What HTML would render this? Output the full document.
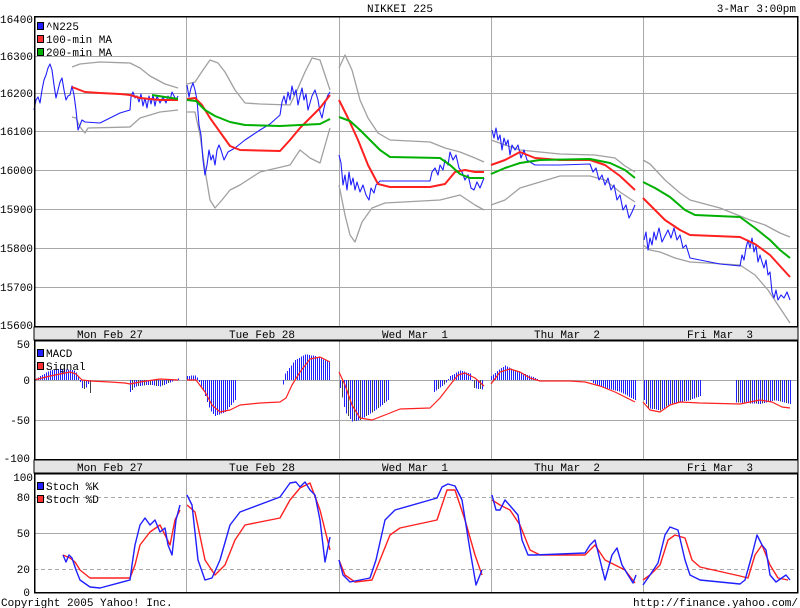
<!DOCTYPE html>
<html><head><meta charset="utf-8"><style>
html,body{margin:0;padding:0;background:#fff}
svg{display:block}
text{font-family:"Liberation Mono","DejaVu Sans Mono",monospace;font-size:11px;fill:#000;white-space:pre}
</style></head><body>
<svg id="s" width="800" height="608" viewBox="0 0 800 608" xmlns="http://www.w3.org/2000/svg" shape-rendering="crispEdges" xml:space="preserve">
<rect width="800" height="608" fill="#fff"/>
<text x="400" y="12" text-anchor="middle">NIKKEI 225</text>
<text x="796" y="12" text-anchor="end">3-Mar 3:00pm</text>
<g stroke="#a8a8a8" stroke-width="1">
<line x1="34" y1="56.5" x2="797" y2="56.5"/><line x1="34" y1="93.5" x2="797" y2="93.5"/>
<line x1="34" y1="131.5" x2="797" y2="131.5"/><line x1="34" y1="170.5" x2="797" y2="170.5"/>
<line x1="34" y1="209.5" x2="797" y2="209.5"/><line x1="34" y1="248.5" x2="797" y2="248.5"/>
<line x1="34" y1="287.5" x2="797" y2="287.5"/>
<line x1="186.5" y1="16" x2="186.5" y2="326"/><line x1="339.5" y1="16" x2="339.5" y2="326"/>
<line x1="491.5" y1="16" x2="491.5" y2="326"/><line x1="643.5" y1="16" x2="643.5" y2="326"/>
<line x1="34" y1="380.5" x2="797" y2="380.5"/><line x1="34" y1="420.5" x2="797" y2="420.5"/>
<line x1="186.5" y1="341" x2="186.5" y2="459"/><line x1="339.5" y1="341" x2="339.5" y2="459"/>
<line x1="491.5" y1="341" x2="491.5" y2="459"/><line x1="643.5" y1="341" x2="643.5" y2="459"/>
<line x1="34" y1="533.5" x2="797" y2="533.5"/>
<line x1="186.5" y1="474" x2="186.5" y2="592"/><line x1="339.5" y1="474" x2="339.5" y2="592"/>
<line x1="491.5" y1="474" x2="491.5" y2="592"/><line x1="643.5" y1="474" x2="643.5" y2="592"/>
</g>
<g stroke="#a8a8a8" stroke-dasharray="4,3"><line x1="34" y1="497.5" x2="797" y2="497.5"/><line x1="34" y1="569.5" x2="797" y2="569.5"/></g>
<rect x="34" y="327" width="764" height="13" fill="#e4e4e4" stroke="#000"/>
<rect x="34" y="460" width="764" height="13" fill="#e4e4e4" stroke="#000"/>
<g text-anchor="middle">
<text x="110" y="338">Mon Feb 27</text><text x="262" y="338">Tue Feb 28</text><text x="415" y="338">Wed Mar  1</text><text x="567" y="338">Thu Mar  2</text><text x="720" y="338">Fri Mar  3</text>
<text x="110" y="471">Mon Feb 27</text><text x="262" y="471">Tue Feb 28</text><text x="415" y="471">Wed Mar  1</text><text x="567" y="471">Thu Mar  2</text><text x="720" y="471">Fri Mar  3</text>
</g>
<g text-anchor="end">
<text x="33" y="23">16400</text><text x="33" y="60">16300</text><text x="33" y="97">16200</text><text x="33" y="135">16100</text><text x="33" y="174">16000</text><text x="33" y="213">15900</text><text x="33" y="252">15800</text><text x="33" y="291">15700</text><text x="33" y="329">15600</text>
<text x="30" y="348">50</text><text x="30" y="384">0</text><text x="30" y="424">-50</text><text x="30" y="462">-100</text>
<text x="33" y="481">100</text><text x="30" y="501">80</text><text x="30" y="537">50</text><text x="30" y="573">20</text><text x="30" y="596">0</text>
</g>
<text x="1" y="606">Copyright 2005 Yahoo! Inc.</text>
<text x="798" y="606" text-anchor="end">http://finance.yahoo.com/</text>
<g id="bars" stroke-width="1" shape-rendering="crispEdges"></g>
<g fill="none" stroke-width="1" shape-rendering="auto" stroke-linejoin="round">
<g stroke="#a0a0a0" stroke-width="1.3">
<polyline points="72,67 80,64 100,62 130,63 140,68 150,76 165,84 178,88"/>
<polyline points="72,117 76,118 80,127 85,133 88,128 130,127 140,118 160,112 178,110"/>
<polyline points="187,84 195,82 203,70 210,60 218,63 225,72 235,90 245,103 260,104 290,105 298,88 305,72 312,58 320,60 330,90"/>
<polyline points="187,112 195,112 200,135 205,170 210,200 215,208 222,200 230,190 240,185 260,172 290,165 300,150 310,158 320,163 330,128"/>
<polyline points="339,68 345,55 352,70 360,100 368,118 378,133 390,140 430,142 445,148 460,152 475,158 484,162"/>
<polyline points="339,185 345,215 350,235 355,242 362,222 372,208 385,203 440,200 460,195 475,205 484,210"/>
<polyline points="491,140 505,145 520,150 560,154 595,155 615,158 625,166 635,172"/>
<polyline points="491,205 505,200 520,188 560,176 590,176 605,180 620,192 635,202"/>
<polyline points="643,160 650,164 665,180 680,193 690,200 720,208 750,220 765,225 780,233 790,237"/>
<polyline points="643,245 650,250 660,252 675,258 690,262 740,265 755,275 768,290 778,305 790,323"/>
</g>
<polyline stroke="#1f1fff" stroke-width="1.1" points="34,110 36,100 38,97 40,103 42,90 44,80 46,75 48,68 50,64 52,70 54,85 56,98 58,90 60,82 62,78 64,90 66,100 68,96 70,95 72,86 74,95 76,110 78,130 80,125 82,120 85,122 100,123 110,118 120,113 130,110 131,97 133,92 135,98 137,96 139,102 141,94 143,106 145,98 147,108 149,96 151,104 153,95 155,106 157,96 160,103 163,97 166,103 168,96 170,100 172,92 174,96 176,100 178,96"/>
<polyline stroke="#1f1fff" stroke-width="1.1" points="187,85 189,97 191,88 193,83 195,90 197,100 199,125 201,135 203,160 205,175 207,165 209,150 211,160 213,155 215,165 217,150 219,145 221,150 224,160 228,152 235,148 245,140 260,130 270,124 280,115 282,102 284,96 286,104 288,92 290,100 292,86 294,95 296,90 298,105 300,96 302,88 304,100 306,94 308,110 310,103 312,96 315,90 318,100 320,112 322,118 324,108 326,100 328,95 330,92"/>
<polyline stroke="#1f1fff" stroke-width="1.1" points="339,155 341,163 343,185 345,175 347,190 349,172 351,185 353,178 355,190 357,182 360,192 363,185 366,195 369,200 371,188 374,193 376,185 380,181 400,181 430,181 432,172 435,168 438,175 440,165 443,170 445,160 448,165 450,152 453,160 456,155 459,168 462,172 465,180 468,175 471,188 474,190 477,182 480,188 484,178"/>
<polyline stroke="#1f1fff" stroke-width="1.1" points="492,130 494,138 496,128 498,140 500,135 502,150 504,138 506,145 508,140 510,155 512,145 515,150 518,145 521,158 524,150 527,160 530,162 535,165 560,165 590,164 593,172 596,168 599,180 602,175 605,185 608,178 611,190 614,185 617,200 620,195 623,210 626,205 629,218 632,212 635,205"/>
<polyline stroke="#1f1fff" stroke-width="1.1" points="644,240 646,232 648,250 650,238 652,245 654,232 656,240 659,228 662,242 665,236 668,230 671,238 674,228 677,240 680,235 683,248 686,245 690,258 700,260 720,264 740,266 742,255 744,260 746,248 748,240 750,248 752,238 754,252 756,246 758,262 760,255 762,262 764,268 766,260 768,275 770,272 772,292 774,298 776,290 778,300 781,295 784,298 787,292 790,300"/>
<polyline stroke="#ff2020" stroke-width="2" points="72,87 85,92 100,93 120,94 130,95 140,98 160,100 178,100"/>
<polyline stroke="#00b000" stroke-width="2" points="152,95 165,97 178,99"/>
<polyline stroke="#ff2020" stroke-width="2" points="187,99 195,98 202,105 210,118 220,132 230,146 240,150 280,151 290,140 300,128 310,118 320,108 330,95"/>
<polyline stroke="#00b000" stroke-width="2" points="187,100 196,101 205,110 215,116 230,122 245,125 280,126 300,125 320,124 330,119"/>
<polyline stroke="#ff2020" stroke-width="2" points="339,100 348,118 358,140 368,165 378,184 390,187 430,187 445,184 455,172 465,170 475,172 484,172"/>
<polyline stroke="#00b000" stroke-width="2" points="339,117 350,121 360,130 370,140 380,150 390,157 440,158 450,165 460,174 470,178 484,178"/>
<polyline stroke="#ff2020" stroke-width="2" points="491,165 505,160 520,152 535,158 560,160 590,160 605,165 620,176 635,190"/>
<polyline stroke="#00b000" stroke-width="2" points="491,174 505,168 520,163 540,160 590,159 610,163 625,170 635,178"/>
<polyline stroke="#ff2020" stroke-width="2" points="643,198 655,210 665,220 680,230 690,235 740,237 755,244 770,255 780,266 790,277"/>
<polyline stroke="#00b000" stroke-width="2" points="643,182 655,188 670,197 685,210 695,215 740,217 755,228 770,240 780,250 790,258"/>
<polyline stroke="#ff2020" stroke-width="1.2" points="34,380 50,376 70,372 76,374 82,380 90,381 110,382 125,383 130,384 140,382 160,379 178,380"/>
<polyline stroke="#ff2020" stroke-width="1.2" points="187,380 196,380 205,392 212,405 220,412 230,410 240,405 260,403 280,402 286,398 292,385 300,372 310,359 320,357 330,362"/>
<polyline stroke="#ff2020" stroke-width="1.2" points="339,372 345,385 352,405 360,418 372,420 385,415 400,409 430,408 440,398 450,385 458,375 465,373 475,378 484,386"/>
<polyline stroke="#ff2020" stroke-width="1.2" points="491,384 500,372 510,369 520,372 530,378 540,381 570,381 585,382 600,386 615,392 625,397 635,402"/>
<polyline stroke="#ff2020" stroke-width="1.2" points="643,402 650,410 660,412 670,405 680,402 700,403 740,404 760,400 772,402 782,407 790,408"/>
<polyline stroke="#ff2020" stroke-width="1.4" points="63,555 70,558 75,562 80,570 90,578 130,578 135,565 140,545 150,532 160,525 165,535 170,545 175,520 180,510"/>
<polyline stroke="#ff2020" stroke-width="1.4" points="187,505 195,512 205,560 215,575 225,565 235,540 245,525 280,518 290,500 300,488 310,483 320,510 330,550"/>
<polyline stroke="#ff2020" stroke-width="1.4" points="339,560 345,575 355,582 372,580 380,560 390,535 400,528 437,520 447,490 455,490 465,520 475,555 482,575"/>
<polyline stroke="#ff2020" stroke-width="1.4" points="492,500 500,505 510,510 520,525 530,550 540,555 585,555 595,545 605,560 615,565 625,570 635,583"/>
<polyline stroke="#ff2020" stroke-width="1.4" points="643,580 650,575 660,565 668,540 675,535 685,538 692,560 700,567 740,576 748,578 755,555 762,545 770,565 778,578 788,580"/>
<polyline stroke="#1f1fff" stroke-width="1.4" points="63,555 66,562 69,555 72,558 76,570 80,580 90,587 100,588 130,580 132,565 135,545 140,525 145,518 150,525 155,520 160,532 165,528 168,545 172,555 176,520 180,505"/>
<polyline stroke="#1f1fff" stroke-width="1.4" points="187,495 192,505 198,560 205,580 212,578 220,560 230,525 240,512 280,497 290,483 296,482 300,487 305,482 310,490 315,495 320,520 325,562 330,537"/>
<polyline stroke="#1f1fff" stroke-width="1.4" points="339,560 343,575 350,582 370,578 376,560 385,520 395,510 437,498 442,487 448,484 455,486 462,500 470,550 476,585 482,570"/>
<polyline stroke="#1f1fff" stroke-width="1.4" points="492,495 496,510 500,510 505,500 512,508 518,515 522,540 528,555 535,555 585,553 590,545 595,540 600,560 605,580 612,555 617,548 622,565 628,575 633,583 636,575"/>
<polyline stroke="#1f1fff" stroke-width="1.4" points="643,585 650,575 658,563 665,535 670,527 678,530 685,560 690,575 700,580 740,584 745,580 752,555 757,535 762,545 766,550 770,575 776,582 786,575 790,580"/>
</g>
<g fill="none" stroke="#000" stroke-width="1.5">
<rect x="34.5" y="16.5" width="763" height="310"/>
<rect x="34.5" y="340.5" width="763" height="119"/>
<rect x="34.5" y="473.5" width="763" height="119"/>
</g>
<g stroke="#000" stroke-width="1">
<rect x="37.5" y="22.5" width="6" height="7" fill="#1f1fff"/>
<rect x="37.5" y="35.5" width="6" height="7" fill="#ff3030"/>
<rect x="37.5" y="48.5" width="6" height="7" fill="#00b000"/>
<rect x="37.5" y="349.5" width="6" height="7" fill="#1f1fff"/>
<rect x="37.5" y="362.5" width="6" height="7" fill="#ff3030"/>
<rect x="37.5" y="482.5" width="6" height="7" fill="#1f1fff"/>
<rect x="37.5" y="495.5" width="6" height="7" fill="#ff3030"/>
</g>
<text x="46" y="30">^N225</text><text x="46" y="43">100-min MA</text><text x="46" y="56">200-min MA</text>
<text x="46" y="357">MACD</text><text x="46" y="370">Signal</text>
<text x="46" y="490">Stoch %K</text><text x="46" y="503">Stoch %D</text>
</svg>
<script>
var k=[
[[36,2],[50,12],[60,14],[75,12],[78,5],[82,-10],[85,-12],[88,-5],[90,-16],[92,0],[128,0],[130,-15],[135,-8],[150,-6],[160,-8],[170,-3],[178,2]],
[[187,5],[196,6],[200,-5],[205,-20],[210,-38],[215,-45],[225,-40],[235,-25],[236,0],[245,0],[246,-18],[247,0],[281,0],[282,-12],[285,8],[295,25],[305,32],[315,30],[330,22]],
[[340,-10],[345,-40],[352,-52],[360,-50],[375,-38],[388,-25],[389,0],[398,0],[399,-25],[400,0],[433,0],[434,-15],[445,-5],[450,5],[460,12],[470,8],[474,-10],[482,-12]],
[[491,5],[500,14],[505,18],[515,12],[530,5],[540,0],[590,0],[592,-3],[600,-8],[620,-15],[635,-25]],
[[644,-25],[648,-35],[660,-38],[670,-30],[690,-25],[700,-20],[701,0],[735,0],[736,-28],[760,-30],[775,-25],[790,-30]]];
var g=document.getElementById('bars'),ns='http://www.w3.org/2000/svg';
function f(p,x){for(var i=0;i<p.length-1;i++){if(x>=p[i][0]&&x<=p[i+1][0]){var t=(x-p[i][0])/((p[i+1][0]-p[i][0])||1);return p[i][1]+t*(p[i+1][1]-p[i][1]);}}return 0;}
k.forEach(function(p){for(var x=p[0][0];x<=p[p.length-1][0];x+=2){var v=f(p,x);if(Math.abs(v)<1)continue;var l=document.createElementNS(ns,'line');l.setAttribute('x1',x+.5);l.setAttribute('x2',x+.5);l.setAttribute('y1',380);l.setAttribute('y2',380-v*0.8);l.setAttribute('stroke',(x%6==0&&v<0)?'#444':'#1f1fff');g.appendChild(l);}});
</script>
</body></html>
